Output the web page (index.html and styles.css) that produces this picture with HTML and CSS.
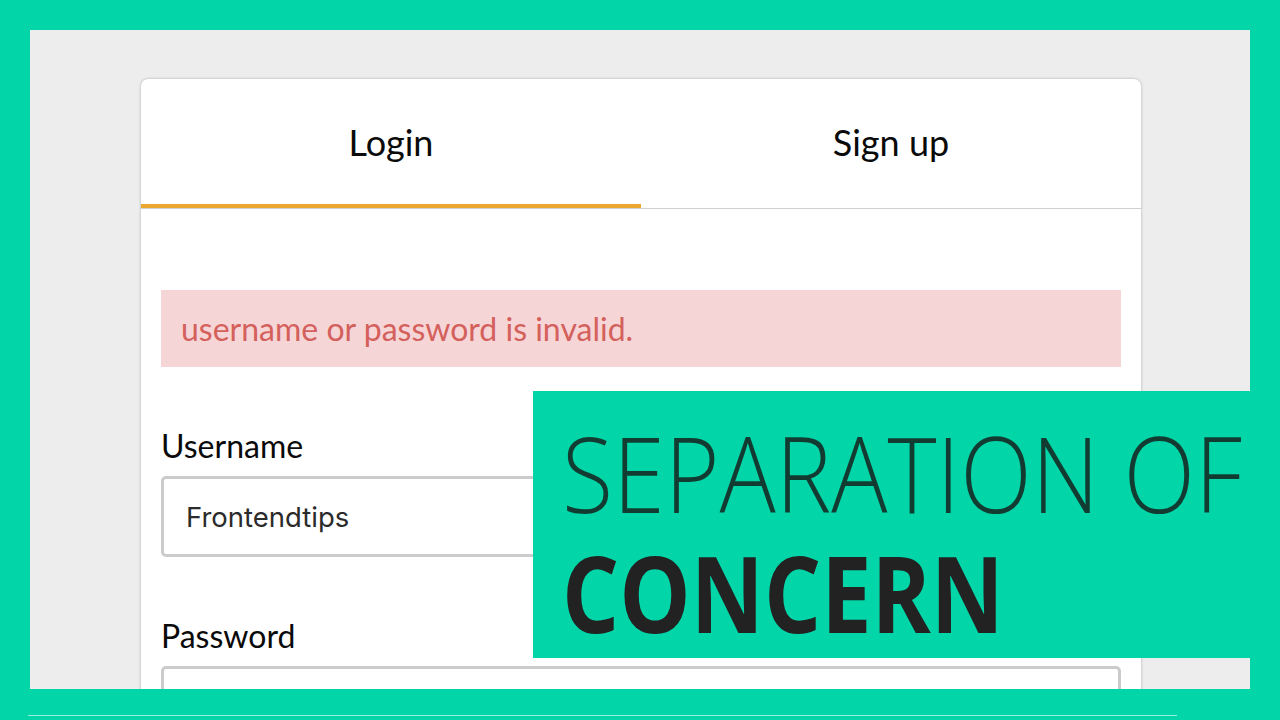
FILE: index.html
```html
<!DOCTYPE html>
<html lang="en">
<head>
<meta charset="utf-8">
<title>Separation of Concern</title>
<link rel="stylesheet" href="styles.css">
</head>
<body>
  <div class="frame">
    <div class="card">
      <div class="tabs">
        <div class="tab active">Login</div>
        <div class="tab">Sign up</div>
      </div>
      <div class="card-body">
        <div class="alert">username or password is invalid.</div>
        <div class="field">
          <label class="label">Username</label>
          <div class="input">Frontendtips</div>
        </div>
        <div class="field">
          <label class="label">Password</label>
          <div class="input"></div>
        </div>
      </div>
    </div>
  </div>
  <div class="progress"></div>
  <div class="title-box">
    <div class="title-light"><span class="squeeze light">SEPARATION OF</span></div>
    <div class="title-bold"><span class="squeeze bold">CONCERN</span></div>
  </div>
</body>
</html>
```
FILE: styles.css
```css
html, body {
  margin: 0;
  padding: 0;
}
body {
  width: 1280px;
  height: 720px;
  overflow: hidden;
  background: #02d5a8;
  position: relative;
  font-family: Lato, "Noto Sans", sans-serif;
}
.frame {
  margin: 30px 30px 0;
  height: 659px;
  background: #ededed;
  overflow: hidden;
  padding: 49px 0 0 111px;
  box-sizing: border-box;
}
.card {
  width: 1000px;
  height: 700px;
  background: #fff;
  border-radius: 7px;
  box-shadow: 0 0 3px rgba(0, 0, 0, 0.28);
}
.tabs {
  display: flex;
  border-bottom: 1px solid #cfcfcf;
}
.tab {
  flex: 1;
  height: 125px;
  display: flex;
  align-items: center;
  justify-content: center;
  font-size: 36px;
  color: #0a0a0a;
  border-bottom: 4px solid transparent;
}
.tab.active {
  border-bottom-color: #eba72f;
}
.card-body {
  padding: 81px 20px 0;
}
.alert {
  height: 77px;
  display: flex;
  align-items: center;
  padding-left: 20px;
  background: #f6d5d7;
  color: #d4605c;
  font-size: 32px;
}
.field {
  display: flex;
  flex-direction: column;
  gap: 12px;
  margin-top: 61px;
}
.label {
  font-size: 32px;
  line-height: 36px;
  color: #0a0a0a;
}
.input {
  height: 81px;
  box-sizing: border-box;
  border: 3px solid #cbcbcb;
  border-radius: 5px;
  padding-left: 22px;
  display: flex;
  align-items: center;
  font-family: Inter, "Noto Sans", sans-serif;
  font-size: 27.5px;
  color: #2b2b2b;
}
.progress {
  margin: 26px 0 0 28px;
  width: 1149px;
  height: 1px;
  background: rgba(255, 255, 255, 0.6);
}
.title-box {
  position: absolute;
  left: 533px;
  top: 391px;
  width: 747px;
  height: 267px;
  background: #02d5a8;
  box-sizing: border-box;
  padding: 21px 0 0 29px;
  font-family: "Open Sans", sans-serif;
  font-size: 106px;
  line-height: 120px;
  white-space: nowrap;
}
.squeeze {
  display: inline-block;
  transform-origin: 0 50%;
}
.squeeze.light {
  font-weight: 300;
  color: #123c32;
  transform: scaleX(0.883);
}
.squeeze.bold {
  font-weight: 700;
  color: #222;
  transform: scaleX(0.848);
}
```
